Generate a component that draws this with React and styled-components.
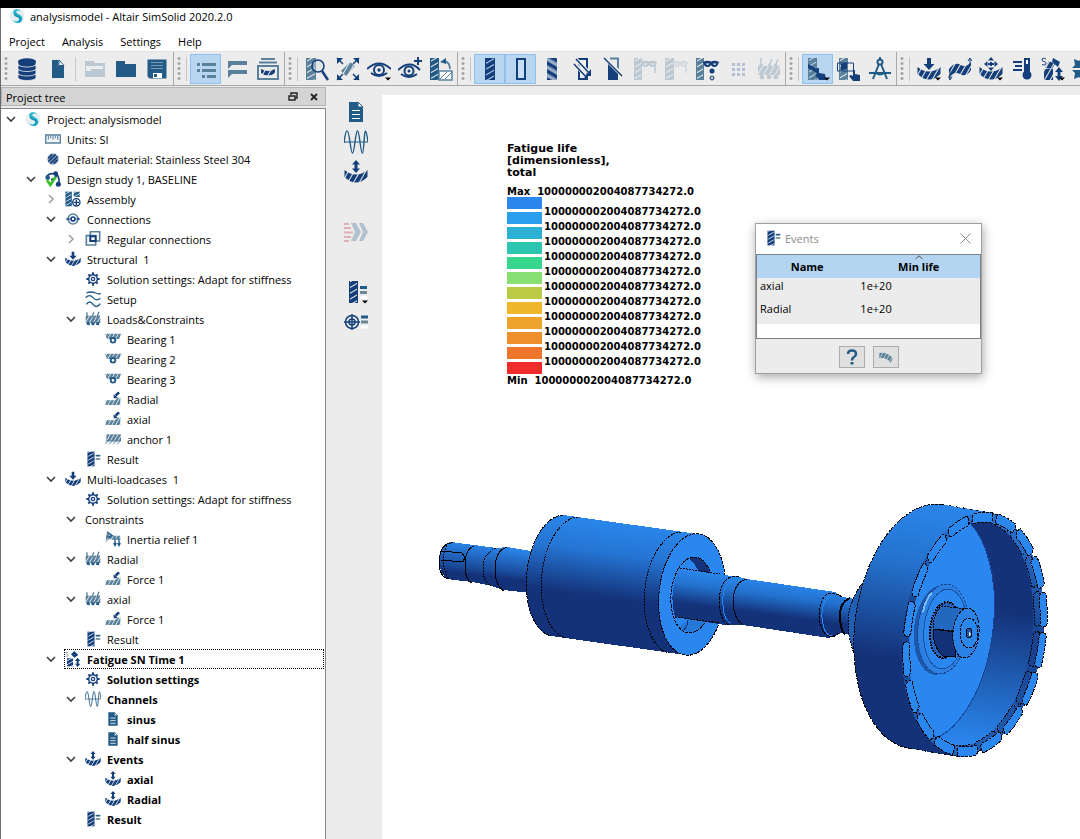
import React from 'react'
import styled, { createGlobalStyle } from 'styled-components'

const navy = '#143f7b'
const teal = '#225b86'
const slate = '#5a819b'
const pale = '#bcc8d2'

const GlobalStyle = createGlobalStyle`
* {
box-sizing: border-box;
}

body {
margin: 0;
background-color: #ececec;
color: #000;
font-family: 'Open Sans', 'Noto Sans', sans-serif;
font-size: 11px;
}

button {
font: inherit;
color: inherit;
padding: 0;
border: none;
background: none;
}
`;

const Window = styled.div`
display: flex;
flex-direction: column;
height: 100vh;
overflow: hidden;
border-top: 8px solid #000;
`;

const Frame = styled.div`
display: flex;
flex-direction: column;
flex: 1;
min-height: 0;
border-left: 1px solid #6b6b6b;
`;

const TitleBar = styled.header`
display: flex;
align-items: center;
gap: 5px;
height: 16px;
padding-left: 8px;
background-color: #fff;
`;

const MenuBar = styled.nav`
display: flex;
align-items: center;
gap: 17px;
height: 28px;
padding: 8px 8px 0;
background-color: #fff;
border-bottom: 1px solid #e2e2e2;
`;

const ToolbarRow = styled.div`
display: flex;
height: 34px;
flex-shrink: 0;
overflow: hidden;
border-bottom: 1px solid #a8a8a8;
`;

const ToolGroup = styled.div`
display: flex;
align-items: center;
flex-shrink: 0;
padding-right: 1px;
border-right: 1px solid #a8a8a8;
`;

const Grip = styled.span`
width: 10px;
height: 26px;
background: radial-gradient(circle at 50% 50%, #a6a6a6 1px, transparent 2px) 3px 0 / 4px 5px repeat-y;
`;

const Divider = styled.span`
width: 6px;
height: 24px;
background: linear-gradient(#c6c6c6, #c6c6c6) 2px 0 / 1px 100% no-repeat;
`;

const ToolButton = styled.button`
display: flex;
align-items: center;
justify-content: center;
width: 31px;
height: 30px;
border: 1px solid ${(props) => (props.$active ? '#91c1f0' : 'transparent')};
background-color: ${(props) => (props.$active ? '#b9d6f0' : 'transparent')};
`;

const Main = styled.div`
display: flex;
flex: 1;
min-height: 0;
`;

const Dock = styled.aside`
display: flex;
flex-direction: column;
width: 325px;
flex-shrink: 0;
padding-top: 1px;
`;

const DockHeader = styled.div`
display: flex;
align-items: center;
gap: 6px;
height: 19px;
padding: 1px 4px 0;
border: 1px solid #b4b4b4;
background-color: #d4d4d4;

h2 {
flex: 1;
margin: 0;
font: inherit;
}
`;

const SmallButton = styled.button`
display: flex;
align-items: center;
justify-content: center;
width: 15px;
height: 15px;
`;

const Tree = styled.ul`
flex: 1;
margin: 2px 0 0;
padding: 0;
list-style: none;
overflow: hidden;
background-color: #fff;
border-top: 1px solid #828790;
border-right: 1px solid #828790;
`;

const TreeRow = styled.li`
display: flex;
align-items: center;
height: 20px;
padding-left: ${(props) => props.$level * 20 + 2}px;
font-weight: ${(props) => (props.$bold ? 700 : 400)};
`;

const Toggle = styled.span`
display: flex;
justify-content: center;
width: 16px;
margin-right: 5px;
flex-shrink: 0;
`;

const ToggleButton = styled.button`
display: flex;
align-items: center;
justify-content: center;
width: 16px;
height: 16px;
`;

const TreeLabel = styled.span`
display: flex;
align-items: center;
flex: 1;
gap: 6px;
height: 20px;
margin-right: 1px;
padding-left: 1px;
white-space: pre;
outline: ${(props) => (props.$focused ? '1px dotted #000' : 'none')};
outline-offset: -1px;
`;

const SideBar = styled.div`
display: flex;
flex-direction: column;
align-items: center;
width: 56px;
flex-shrink: 0;
padding: 11px 0 0 4px;
`;

const SideGap = styled.span`
height: 30px;
`;

const Viewport = styled.main`
position: relative;
flex: 1;
min-width: 0;
margin-top: 9px;
background-color: #fff;
overflow: hidden;
`;

const ModelView = styled.svg`
display: block;
width: 100%;
height: 100%;
`;

const Legend = styled.section`
position: absolute;
left: 125px;
top: 48px;
font-family: 'DejaVu Sans', sans-serif;
font-size: 10px;
font-weight: 700;
line-height: 12px;

h3 {
margin: 0 0 7px;
font-size: 11px;
}

p {
margin: 0;
white-space: pre;
}
`;

const LegendScale = styled.div`
display: flex;
gap: 2px;
margin: -1px 0 1px;
`;

const SwatchColumn = styled.div`
display: grid;
gap: 3px;
`;

const Swatch = styled.span`
width: 35px;
height: 12px;
background-color: ${(props) => props.$color};
`;

const ValueColumn = styled.div`
padding-top: 7px;
line-height: 15px;
`;

const Dialog = styled.section`
position: absolute;
left: 373px;
top: 128px;
width: 227px;
border: 1px solid #a0a0a0;
background-color: #ececec;
box-shadow: 1px 3px 10px rgba(0, 0, 0, 0.35);
`;

const DialogTitle = styled.div`
display: flex;
align-items: center;
gap: 4px;
height: 30px;
padding: 0 8px 2px 9px;
background-color: #fff;
color: #8c8c8c;

h2 {
flex: 1;
margin: 0;
font: inherit;
}
`;

const TableFrame = styled.div`
height: 85px;
border: 1px solid #7b8086;
background-color: #fff;
`;

const EventTable = styled.table`
width: 100%;
border-collapse: collapse;
table-layout: fixed;
background-color: #ececec;

th {
position: relative;
height: 23px;
padding: 0;
background-color: #b4d5f2;
}

th:first-child {
width: 45%;
}

td {
height: 23px;
padding: 0 3px;
line-height: 16px;
vertical-align: top;
}
`;

const SortMark = styled.svg`
position: absolute;
left: 50%;
top: 0;
width: 8px;
height: 5px;
margin-left: -4px;
`;

const DialogFooter = styled.div`
display: flex;
justify-content: center;
gap: 8px;
padding: 7px 0 5px;
`;

const FooterButton = styled.button`
display: flex;
align-items: center;
justify-content: center;
width: 26px;
height: 22px;
border: 1px solid #adadad;
background-color: #e0e0e0;
`;

// shared stripes for the hatched "solid" glyphs
const stripes = { navy, slate, pale, teal }

const Patterns = () => (
    <svg width="0" height="0" style={{ position: 'absolute' }} aria-hidden="true">
        <defs>
            {Object.keys(stripes).map((key) => (
                <React.Fragment key={key}>
                    <pattern id={`bar-${key}`} width="5" height="5" patternUnits="userSpaceOnUse" patternTransform="rotate(-30)">
                        <rect width="5" height="4" fill={stripes[key]} />
                    </pattern>
                    <pattern id={`arc-${key}`} width="5" height="5" patternUnits="userSpaceOnUse" patternTransform="rotate(30)">
                        <rect width="4" height="5" fill={stripes[key]} />
                    </pattern>
                </React.Fragment>
            ))}
            <pattern id="bar-mixed" width="7" height="7" patternUnits="userSpaceOnUse" patternTransform="rotate(30)">
                <rect width="7" height="7" fill="#98abc6" />
                <rect width="7" height="3.5" fill={navy} />
            </pattern>
        </defs>
    </svg>
)

const Bar = ({ x = 7, color = 'navy', w = 10 }) => (
    <>
        <rect x={x} y="1" width={w} height="22" fill={`url(#bar-${color})`} />
        <path d={`M${x + 0.5} 1v22M${x + w - 0.5} 1v22`} stroke={stripes[color]} />
    </>
)

const arcPath = 'M0.500 10Q12 19 23.500 10V17Q12 28 0.500 17Z'
const Caret = () => <path d="M18 20.500h6l-3 3z" fill="#000" />
const Mask = ({ color }) => (
    <path d="M8 5q4-2 8-.5 4-1.500 8 .5-1.500 5.500-5 5-2 0-3-2-1 2-3 2-4 .5-5-5zm3 1.500q0 1.500 2 1.500l1.500-1.500zm7 0 1 1.500q2 0 2.500-1.500z" fill={color} fillRule="evenodd" />
)

const icons = {
    logo: (
        <>
            <circle cx="12" cy="12" r="11" fill="#e4eef1" />
            <path d="M18 5C13-1 4 3 7 9c2 4 9 3 8 8-1 4-6 4-9 1 3 7 14 6 14-2 0-7-9-6-9-10 0-3 4-3 7-1z" fill="#27b3cf" />
            <path d="M8 7c1 5 9 4 10 9 .5 3-2 5-4 5 3-2 3-5-1-7C8 12 6 10 8 7z" fill="#1a8fa8" />
        </>
    ),
    database: (
        <>
            {[16, 11.5, 7, 2.500].map((y) => (
                <path key={y} d={`M3 ${y + 1.500}v3c0 4 18 4 18 0v-3z`} fill={navy} stroke="#ececec" strokeWidth=".8" />
            ))}
            <ellipse cx="12" cy="4.500" rx="9" ry="3.200" fill={navy} />
        </>
    ),
    file: (
        <>
            <path d="M6 3h6.500v6H18v12H6z" fill={teal} />
            <path d="M13 3l5 5.500h-5z" fill="#fff" stroke={teal} />
        </>
    ),
    open: <path d="M2 4h9v2h11v14H2zM3 9v5h5v-2h12V9z" fill={pale} fillRule="evenodd" />,
    folder: <path d="M2 4h9v3h11v13H2z" fill={teal} />,
    save: (
        <>
            <path d="M2.500 2.500h19v19h-17l-2-2z" fill={teal} />
            <path d="M6 5.500h12M6 8.500h12M6 11.500h12" stroke="#7d9ab0" />
            <path d="M8 16h9v5H8z" fill="#fff" />
            <path d="M9 17h3v3H9z" fill={teal} />
        </>
    ),
    list: (
        <path d="M3 6h3v3H3zM8 6h14v3H8zM3 12h3v3H3zM8 12h14v3H8zM8 18h3v3H8zM13 18h9v3h-9z" fill={slate} />
    ),
    chat: <path d="M3 4h19v4H7l-4 4zM3 13h19v4H7l-4 4z" fill={slate} />,
    stack: (
        <>
            <path d="M5 1h14v2H5zM3 4.500h18v2H3z" fill={slate} />
            <path d="M2 9h20v13H2z" fill="none" stroke={slate} strokeWidth="2" />
            <path d="M5 12q7 4 14 0v4q-7 5-14 0z" fill="url(#arc-navy)" />
        </>
    ),
    inspect: (
        <>
            <Bar x={1} color="slate" w={10} />
            <circle cx="13" cy="9" r="6" fill="#d5dde3" fillOpacity=".4" stroke={navy} strokeWidth="1.600" />
            <path d="M17 14l6 9" stroke={navy} strokeWidth="2.500" />
        </>
    ),
    fit: (
        <>
            <path d="M5 14L14 5l5 4-9 10z" fill="url(#arc-slate)" />
            <path d="M1 1l6 6M23 1l-6 6M1 23l6-6M23 23l-6-6" stroke={navy} strokeWidth="1.500" />
            <path d="M1 1h6L1 7zM23 1v6l-6-6zM1 23v-6l6 6zM23 23h-6l6-6z" fill={navy} />
        </>
    ),
    eye: (
        <>
            <path d="M0 12q12-11 24 0" fill="none" stroke={navy} strokeWidth="2" />
            <circle cx="12" cy="13" r="5" fill="none" stroke={navy} strokeWidth="2" />
            <circle cx="12" cy="13" r="1.700" fill={navy} />
            <path d="M4 16q8 6 16 0" fill="none" stroke={navy} strokeWidth="2" />
            <Caret />
        </>
    ),
    eyeAdd: (
        <>
            <path d="M0 13q12-11 22 0" fill="none" stroke={navy} strokeWidth="2" />
            <circle cx="11" cy="14" r="4.500" fill="none" stroke={navy} strokeWidth="2" />
            <circle cx="11" cy="14" r="1.500" fill={navy} />
            <path d="M3 17q8 6 16 0M16 4h8M20 0v8" fill="none" stroke={navy} strokeWidth="2" />
        </>
    ),
    sectionView: (
        <>
            <Bar x={1} w={9} color="teal" />
            <path d="M10 14h13v9H10z" fill="#fff" stroke={slate} strokeWidth="1.500" />
            <path d="M11 22l7-7M16 22l7-7" stroke={slate} />
            <path d="M15 4q6 1 6 8" fill="none" stroke={slate} strokeWidth="1.800" />
            <path d="M11 5l6-4v6z" fill={teal} />
        </>
    ),
    solid: <Bar />,
    outline: <path d="M8 2h8v20H8z" fill="#c7def3" stroke={navy} strokeWidth="2" />,
    mixed: <path d="M7 1h10v22H7z" fill="url(#bar-mixed)" />,
    hideOne: (
        <>
            <path d="M8 2h8v20H8z" fill="#f2f2f2" stroke={navy} strokeWidth="2" />
            <path d="M3 6l14 15M6 3l14 15" stroke="#ececec" strokeWidth="4" />
            <path d="M3 7l13 14M5 2l14 15" stroke={navy} strokeWidth="1.500" />
            <path d="M20 12v7h-6zM17 17v6h-6z" fill={navy} />
        </>
    ),
    hideHalf: (
        <>
            <path d="M6 2h10v21H6z" fill={navy} />
            <path d="M6 1h10v12L6 3z" fill="#ececec" />
            <path d="M8 1.500h8v11" fill="none" stroke={slate} strokeWidth="2" />
            <path d="M2 0l18 18" stroke="#ececec" strokeWidth="4" />
            <path d="M2 1l18 18" stroke={navy} strokeWidth="1.500" />
        </>
    ),
    maskBar: (
        <>
            <Bar x={1} w={8} color="pale" />
            <Mask color={pale} />
            <path d="M22 7v9" stroke={pale} strokeWidth="1.500" />
        </>
    ),
    maskPale: (
        <>
            <Bar x={1} w={9} color="pale" />
            <Mask color="#d2dae0" />
            <path d="M22 7v9" stroke="#d2dae0" strokeWidth="1.500" />
        </>
    ),
    maskActive: (
        <>
            <Bar x={1} w={8} color="slate" />
            <Mask color={navy} />
            <circle cx="17" cy="14" r="2.500" fill={navy} />
            <circle cx="17" cy="21" r="2" fill={pale} stroke={navy} />
        </>
    ),
    dots: (
        <path d="M6 6h3v3H6zM11 6h3v3h-3zM16 6h3v3h-3zM6 11h3v3H6zM11 11h3v3h-3zM16 11h3v3h-3zM6 16h3v3H6zM11 16h3v3h-3zM16 16h3v3h-3z" fill="#b3c0d3" />
    ),
    loadsPale: (
        <>
            <path d="M1 9h22v9H1z" fill="url(#arc-pale)" />
            <path d="M4 1v9M15 2l-3 7M21 2l-3 7" stroke={pale} strokeWidth="1.500" />
            <path d="M2 7h4l-2 4zM11 7l4 1-3 3zM17 7l4 1-3 3z" fill={pale} />
            <circle cx="5" cy="20" r="2.300" fill={pale} />
            <circle cx="12" cy="20" r="2.300" fill={pale} />
            <circle cx="19" cy="20" r="2.300" fill={pale} />
        </>
    ),
    pick: (
        <>
            <Bar x={2} w={9} color="slate" />
            <path d="M2 7l9 5v4l-9-5z" fill={navy} />
            <path d="M11 11h2v5l6 1 1 6h-7l-4-5 2-1z" fill={navy} />
            <Caret />
        </>
    ),
    pickBox: (
        <>
            <Bar x={2} w={9} color="slate" />
            <path d="M4 7l6-2v7l-6 2z" fill={navy} />
            <path d="M.500 6h16v8h-16z" fill="none" stroke={navy} />
            <path d="M16 13h2v4l5 1v6h-7l-4-5 2-1 2 1z" fill={navy} />
        </>
    ),
    compass: (
        <>
            <circle cx="12" cy="5" r="2.500" fill="none" stroke={teal} strokeWidth="2" />
            <path d="M12 0v3M11 7L5 22M13 7l6 15M1 16h22M8 16q4 3 8 0" fill="none" stroke={teal} strokeWidth="2" />
        </>
    ),
    load: (
        <>
            <path d={arcPath} fill="url(#arc-navy)" />
            <path d="M10 1h4v6h3.500L12 13 6.500 7H10z" fill={navy} />
        </>
    ),
    loadMenu: (
        <>
            <path d={arcPath} fill="url(#arc-navy)" />
            <path d="M10 1h4v6h3.500L12 13 6.500 7H10z" fill={navy} />
            <Caret />
        </>
    ),
    modal: (
        <>
            <path d="M1 12q6-8 12-4 5 3 10-3v8q-5 8-11 4-6-3-11 4z" fill="url(#arc-navy)" />
            <path d="M2 13v9M.500 19.500L2 23l2-3.500M22 9V2M20 4l2-3 2 3" fill="none" stroke={navy} />
        </>
    ),
    dynamic: (
        <>
            <path d={arcPath} fill="url(#arc-navy)" />
            <path d="M12 0l3 3.500H9zM12 14l3-3.500H9zM5 7l3.500-3v6zM19 7l-3.500-3v6z" fill={navy} />
            <path d="M11 5h2v4h-2zM9 6h6v2H9z" fill={navy} />
            <Caret />
        </>
    ),
    thermal: (
        <>
            <path d="M15 2h4v12h-4z" fill="#fff" stroke={navy} strokeWidth="2" />
            <circle cx="17" cy="18" r="4.500" fill={navy} />
            <path d="M17 7v10" stroke={navy} strokeWidth="2" />
            <path d="M3 5h9M5 9h7M3 13h9" stroke={navy} strokeWidth="1.800" />
        </>
    ),
    fatigue: (
        <>
            <path d="M3 11h9v12H3z" fill="url(#bar-navy)" />
            <path d="M9 5l5-5 6 6-6 4z" fill={navy} />
            <path d="M19 10l4 5h-2.500v4H23l-4 5-4-5h2.500v-4H15z" fill={navy} />
            <path d="M5 2Q1 0 1 3q0 1 2 1.500T5 6q0 3-4 1.500" fill="none" stroke={slate} />
        </>
    ),
    fatigueMenu: (
        <>
            <path d="M3 12h9v11H3z" fill="url(#arc-navy)" />
            <path d="M4 11l4-7 6 3-3 5z" fill="url(#arc-navy)" />
            <path d="M12 1l7 4-2 5-6-5z" fill={navy} />
            <path d="M18 10l4 5h-2.500v4H22l-4 5-4-5h2.500v-4H14z" fill={navy} />
            <path d="M5 2Q1 0 1 3q0 1 2 1.500T5 6q0 3-4 1.500" fill="none" stroke={navy} />
            <Caret />
        </>
    ),
    collapse: (
        <path d="M2 2l5 2 3-3v10H0l3-3zM2 22l5-2 3 3V13H0l3 3zM22 2l-5 2-3-3v10h10l-3-3zM22 22l-5-2-3 3V13h10l-3 3z" fill={teal} />
    ),
    document: (
        <>
            <path d="M5 2h9l5 5v15H5z" fill={teal} />
            <path d="M14 2v5h5z" fill="#fff" stroke={teal} />
            <path d="M8 10.500h8M8 14.500h8M8 18.500h8" stroke="#fff" strokeWidth="1.200" />
        </>
    ),
    wave: (
        <>
            <path d="M0 12h24" stroke={teal} />
            <path d="M0 13C2-3 4-3 6 12s3 15 5 0 3-15 5 0 3 15 4 0 2-14 4 0" fill="none" stroke={teal} strokeWidth="1.400" />
        </>
    ),
    event: (
        <>
            <path d={arcPath} fill="url(#arc-navy)" />
            <path d="M12 0l4 4.500h-2.500v4H16L12 13 8 8.500h2.500v-4H8z" fill={navy} />
        </>
    ),
    run: (
        <>
            <path d="M0 4h5M0 8h7M0 12.500h9M0 17h7M0 21h5" stroke="#dfb1b5" strokeWidth="2" />
            <path d="M7 3h5l5 9-5 9H7l4-9zM15 3h4l5 9-5 9h-4l4-9z" fill="#b3c0ce" />
        </>
    ),
    resultMenu: (
        <>
            <Bar x={5} w={9} />
            <path d="M16 7.500h7" stroke={teal} strokeWidth="3" />
            <path d="M16 12.500h7" stroke="#6f8898" strokeWidth="3" />
            <path d="M16 17.500h7" stroke="#fff" strokeWidth="3" />
            <Caret />
        </>
    ),
    result: (
        <>
            <Bar x={4} w={10} />
            <path d="M16 7h7" stroke={teal} strokeWidth="2.500" />
            <path d="M16 12h7" stroke="#6f8898" strokeWidth="2.500" />
        </>
    ),
    target: (
        <>
            <circle cx="8" cy="12" r="6.500" fill="none" stroke={navy} strokeWidth="1.500" />
            <circle cx="8" cy="12" r="3" fill="none" stroke={navy} strokeWidth="1.500" />
            <path d="M0 12h16M8 4v16" stroke={navy} strokeWidth="1.500" />
            <path d="M17 7h7" stroke={teal} strokeWidth="3" />
            <path d="M17 12h7" stroke="#6f8898" strokeWidth="3" />
            <path d="M17 17h7" stroke="#fff" strokeWidth="3" />
        </>
    ),
    ruler: (
        <>
            <path d="M1 6h22v12H1z" fill="#eef2f5" stroke={slate} strokeWidth="2" />
            <path d="M5 7v6M8.500 7v4M12 7v6M15.500 7v4M19 7v6" stroke={slate} strokeWidth="1.500" />
        </>
    ),
    material: (
        <>
            <circle cx="12" cy="12" r="8.500" fill="#8fa9bd" />
            <path d="M5 11l6-6M5 16L16 5M8 19L19 8M13 19l6-6" stroke={navy} strokeWidth="2.600" />
        </>
    ),
    design: (
        <>
            <path d="M2 9Q5 3 14 4q8 0 7 16M9 13q8-1 8-8" fill="none" stroke={navy} strokeWidth="2.500" />
            <circle cx="16" cy="4" r="3.500" fill={navy} />
            <circle cx="4" cy="10" r="3.500" fill={teal} />
            <circle cx="20" cy="20" r="3.800" fill={navy} />
            <path d="M3 14l5 7 8-12" fill="none" stroke="#39c02d" strokeWidth="4" />
        </>
    ),
    assembly: (
        <>
            <rect x="1" y="1" width="9" height="22" fill="url(#bar-teal)" />
            <rect x="13" y="1" width="9" height="8" fill="url(#bar-teal)" />
            <path d="M1.500 1v22M9.500 1v22" stroke={teal} />
            <circle cx="17" cy="17" r="5.500" fill="#fff" stroke={navy} strokeWidth="2" />
            <path d="M13 17h8M17 13v8" stroke={navy} strokeWidth="2" />
        </>
    ),
    connections: (
        <>
            <circle cx="12" cy="12" r="7.500" fill="none" stroke={slate} strokeWidth="2.500" />
            <circle cx="12" cy="12" r="3" fill="none" stroke={navy} strokeWidth="2.500" />
            <path d="M2 12h5M17 12h5" stroke={navy} strokeWidth="2.500" />
        </>
    ),
    regular: (
        <>
            <path d="M8 1h14v14H8z" fill="none" stroke={slate} strokeWidth="2.500" />
            <path d="M2 7h14v14H2z" fill="none" stroke={slate} strokeWidth="2.500" />
            <path d="M8 8h8v7H8z" fill="#fff" stroke={navy} strokeWidth="3" />
        </>
    ),
    gear: (
        <>
            <circle cx="12" cy="12" r="6.500" fill="none" stroke={navy} strokeWidth="2.200" />
            <circle cx="12" cy="12" r="2.500" fill="none" stroke={navy} strokeWidth="2" />
            <path d="M12 2v4M12 18v4M2 12h4M18 12h4M5 5l3 3M16 16l3 3M19 5l-3 3M8 16l-3 3" stroke={navy} strokeWidth="2.800" />
        </>
    ),
    setup: (
        <path d="M2 3q7-3 14 0t7 0M1 10q6-6 11 0t11 1M2 20q5-7 10 0t11-1" fill="none" stroke={teal} strokeWidth="2" />
    ),
    loads: (
        <>
            <path d="M1 7h22v11H1z" fill="url(#arc-slate)" />
            <path d="M3 2v7M13 2l-2 7M21 1l-3 8" stroke={slate} strokeWidth="2" />
            <circle cx="5" cy="19" r="2.500" fill={teal} />
            <circle cx="12" cy="19" r="2.500" fill={teal} />
            <circle cx="19" cy="19" r="2.500" fill={teal} />
        </>
    ),
    bearing: (
        <>
            <path d="M0 4h24l-2 8H3z" fill="url(#arc-slate)" />
            <circle cx="12" cy="14" r="3.500" fill="#fff" stroke={teal} strokeWidth="2.800" />
        </>
    ),
    force: (
        <>
            <path d="M1 14h13l9-5v12H1z" fill="url(#arc-slate)" />
            <path d="M21 2l-5 5" stroke={navy} strokeWidth="4" />
            <path d="M13 5v6h7z" fill={navy} />
        </>
    ),
    anchor: (
        <>
            <path d="M2 5h22v10H2z" fill="url(#arc-slate)" />
            <path d="M0 20l5-5M6 20l5-5M12 20l5-5M18 20l5-5M1 15h22" stroke={slate} strokeWidth="1.500" />
        </>
    ),
    inertia: (
        <>
            <path d="M2 3q6 0 8 4h13v6H10Q6 10 1 18z" fill="url(#arc-slate)" />
            <path d="M3 1l8 6-8 3M15 11v9M21 11v9M13 18l2 4 2-4M19 18l2 4 2-4" fill="none" stroke={teal} strokeWidth="2" />
        </>
    ),
    beam: <path d="M2 6q12-2 20 8l-3 7Q13 12 2 14z" fill="url(#arc-slate)" />,
}

const Icon = ({ name, size = 24 }) => (
    <svg width={size} height={size} viewBox="0 0 24 24" aria-hidden="true">{icons[name]}</svg>
)

const toolGroups = [
    ['list*', 'chat', 'stack'],
    ['inspect', 'fit', 'eye', 'eyeAdd', 'sectionView'],
    ['solid*', 'outline*', 'mixed', 'hideOne', 'hideHalf', 'maskBar', 'maskPale', 'maskActive', 'dots', 'loadsPale'],
    ['pick*', 'pickBox', 'compass'],
    ['loadMenu', 'modal', 'dynamic', 'thermal', 'fatigueMenu', 'collapse'],
]

const treeItems = [
    { level: 0, icon: 'logo', text: 'Project: analysismodel', state: 'open' },
    { level: 1, icon: 'ruler', text: 'Units: SI' },
    { level: 1, icon: 'material', text: 'Default material: Stainless Steel 304' },
    { level: 1, icon: 'design', text: 'Design study 1, BASELINE', state: 'open' },
    { level: 2, icon: 'assembly', text: 'Assembly', state: 'closed' },
    { level: 2, icon: 'connections', text: 'Connections', state: 'open' },
    { level: 3, icon: 'regular', text: 'Regular connections', state: 'closed' },
    { level: 2, icon: 'load', text: 'Structural  1', state: 'open' },
    { level: 3, icon: 'gear', text: 'Solution settings: Adapt for stiffness' },
    { level: 3, icon: 'setup', text: 'Setup' },
    { level: 3, icon: 'loads', text: 'Loads&Constraints', state: 'open' },
    { level: 4, icon: 'bearing', text: 'Bearing 1' },
    { level: 4, icon: 'bearing', text: 'Bearing 2' },
    { level: 4, icon: 'bearing', text: 'Bearing 3' },
    { level: 4, icon: 'force', text: 'Radial' },
    { level: 4, icon: 'force', text: 'axial' },
    { level: 4, icon: 'anchor', text: 'anchor 1' },
    { level: 3, icon: 'result', text: 'Result' },
    { level: 2, icon: 'load', text: 'Multi-loadcases  1', state: 'open' },
    { level: 3, icon: 'gear', text: 'Solution settings: Adapt for stiffness' },
    { level: 3, text: 'Constraints', state: 'open' },
    { level: 4, icon: 'inertia', text: 'Inertia relief 1' },
    { level: 3, icon: 'loads', text: 'Radial', state: 'open' },
    { level: 4, icon: 'force', text: 'Force 1' },
    { level: 3, icon: 'loads', text: 'axial', state: 'open' },
    { level: 4, icon: 'force', text: 'Force 1' },
    { level: 3, icon: 'result', text: 'Result' },
    { level: 2, icon: 'fatigue', text: 'Fatigue SN Time 1', state: 'open', bold: true, focused: true },
    { level: 3, icon: 'gear', text: 'Solution settings', bold: true },
    { level: 3, icon: 'wave', text: 'Channels', state: 'open', bold: true },
    { level: 4, icon: 'document', text: 'sinus', bold: true },
    { level: 4, icon: 'document', text: 'half sinus', bold: true },
    { level: 3, icon: 'event', text: 'Events', state: 'open', bold: true },
    { level: 4, icon: 'event', text: 'axial', bold: true },
    { level: 4, icon: 'event', text: 'Radial', bold: true },
    { level: 3, icon: 'result', text: 'Result', bold: true },
]

const legendColors = [
    '#2b87ee', '#2c9eee', '#2cb0d3', '#2cc5b0', '#37d68f', '#88df73',
    '#bccb46', '#eeb72c', '#eea32c', '#ee8f2c', '#ee762c', '#ee2c2c',
]

const lifeValue = '100000002004087734272.0'

const events = [
    { name: 'axial', life: '1e+20' },
    { name: 'Radial', life: '1e+20' },
]

// front faces of the wheel teeth, one slice of the rim ring each
const toothCount = 18
const toothPath = (index) => {
    const step = (Math.PI * 2) / toothCount
    const from = index * step - 0.09
    const to = from + step - 0.05
    const point = (angle, rx, ry) => `${(975 + rx * Math.cos(angle)).toFixed(1)} ${(634.5 + ry * Math.sin(angle)).toFixed(1)}`
    return `M${point(from, 69, 120)}L${point(from + 0.02, 71, 123)}A71 123 0 0 1 ${point(to - 0.02, 71, 123)}L${point(to, 69, 120)} ${point(to, 66, 115)} ${point(to - 0.02, 64, 113)}A64 113 0 0 0 ${point(from + 0.02, 64, 113)}L${point(from, 66, 115)}Z`
}
const teeth = Array.from({ length: toothCount }, (_, index) => toothPath(index))

const Model = () => (
    <ModelView viewBox="382 95 698 744" preserveAspectRatio="xMinYMin meet" role="img" aria-label="Shaft with rotor and wheel" shapeRendering="crispEdges">
        <defs>
            <linearGradient id="drum" gradientUnits="userSpaceOnUse" x1="620" y1="523" x2="604" y2="645">
                <stop offset="0" stopColor="#2a86ea" />
                <stop offset=".25" stopColor="#2575d4" />
                <stop offset=".62" stopColor="#143279" />
                <stop offset="1" stopColor="#143279" />
            </linearGradient>
            <linearGradient id="shaftLeft" gradientUnits="userSpaceOnUse" x1="490" y1="546" x2="485" y2="586">
                <stop offset="0" stopColor="#2a86ea" />
                <stop offset=".6" stopColor="#1a4a9a" />
                <stop offset=".75" stopColor="#143279" />
            </linearGradient>
            <linearGradient id="shaftRight" gradientUnits="userSpaceOnUse" x1="767" y1="581" x2="761" y2="628">
                <stop offset="0" stopColor="#2a86ea" />
                <stop offset=".3" stopColor="#2270cc" />
                <stop offset=".7" stopColor="#143279" />
            </linearGradient>
            <linearGradient id="wheelSide" gradientUnits="userSpaceOnUse" x1="950" y1="506" x2="918" y2="750">
                <stop offset="0" stopColor="#2a86ea" />
                <stop offset=".25" stopColor="#2472cd" />
                <stop offset=".64" stopColor="#143279" />
                <stop offset="1" stopColor="#143279" />
            </linearGradient>
            <linearGradient id="wheelWall" gradientUnits="userSpaceOnUse" x1="1015" y1="520" x2="985" y2="750">
                <stop offset="0" stopColor="#143279" />
                <stop offset=".4" stopColor="#143279" />
                <stop offset=".85" stopColor="#2575d4" />
                <stop offset="1" stopColor="#2b87f0" />
            </linearGradient>
            <linearGradient id="rim" gradientUnits="userSpaceOnUse" x1="985" y1="512" x2="965" y2="757">
                <stop offset="0" stopColor="#2575d4" />
                <stop offset=".5" stopColor="#17408c" />
                <stop offset="1" stopColor="#2064bb" />
            </linearGradient>
            <clipPath id="bore"><ellipse cx="692" cy="595" rx="21" ry="38" transform="rotate(5 692 595)" /></clipPath>
            <clipPath id="opening"><ellipse cx="971" cy="634" rx="61" ry="113" transform="rotate(7.500 971 634)" /></clipPath>
            <clipPath id="wheelFront"><ellipse cx="975" cy="634.500" rx="71" ry="123" transform="rotate(7.500 975 634.500)" /></clipPath>
        </defs>

        {/* left shaft end */}
        <path d="M451 542l46 6 10-1 24 4v42l-28-3-11-4-20-4-25-3q-7-5-8-18 2-17 12-19z" fill="url(#shaftLeft)" />
        <g fill="none" stroke="#000">
            <path d="M453 543q-13-1-14 20 1 15 10 16M442 551l20 2 3 4-2 5-22-2M474 546q-9 3-9 20 0 14 7 17M507 547q-12 4-12 22 0 17 9 22" />
            <path d="M447 545q-8 17 1 33M496 548q-13 6-13 20 0 14 8 18" strokeDasharray="2 1" />
        </g>

        {/* rotor drum */}
        <path d="M563 515L698 534 686 655 551 636A33 61 6 0 1 563 515z" fill="url(#drum)" />
        <g fill="none" stroke="#000">
            <path d="M563 515A33 61 6 0 0 551 636" strokeDasharray="3 1" />
            <path d="M578 517A33 61 6 0 0 566 638M681 532A33 61 6 0 0 669 653" strokeDasharray="2 1" />
        </g>
        <ellipse cx="692" cy="594.500" rx="33" ry="61" transform="rotate(6 692 594.500)" fill="#2b87f0" stroke="#000" strokeDasharray="3 1" />
        <g clipPath="url(#bore)">
            <path d="M665 550h55v90h-55z" fill="#2b87f0" />
            <path d="M690 554h30v30h-18q-2-15-12-25z" fill="#143279" />
            <path d="M690 618h28l-26 14q-8 0-14-4z" fill="#2478d8" />
            <path d="M688 620q0 8-7 12" fill="none" stroke="#143279" />
        </g>
        <ellipse cx="692" cy="595" rx="21" ry="38" transform="rotate(5 692 595)" fill="none" stroke="#000" strokeDasharray="3 1" />

        {/* right shaft */}
        <path d="M680 568l40 7 15 1 12 3 88 13 8 5 12 2v37l-14-3-12 5-86-13-18 0-50-8q-7-26 5-49z" fill="url(#shaftRight)" />
        <g fill="none" stroke="#000">
            <path d="M680 568l40 6M675 617l45 6" strokeDasharray="2 1" />
            <path d="M739 577q-18-4-20 24 1 22 11 24" strokeDasharray="3 1" />
            <path d="M747 579q-14 3-14 24 1 16 10 22" />
            <path d="M735 579q-14 6-12 26 1 16 8 18" stroke="#2b87f0" />
            <path d="M842 597q-20-13-23 17 1 22 14 23l6-4" strokeDasharray="3 1" />
            <path d="M831 596q-10 5-9 22 2 18 10 18" stroke="#2b87f0" />
            <path d="M850 598q-11 5-10 20 1 14 5 16" strokeWidth="2" />
        </g>

        {/* wheel */}
        <path d="M864 582q-12 12-16 35 0 24 7 38l10-1z" fill="#205fb4" stroke="#000" strokeDasharray="2 1" />
        <path d="M942 504.500L991 512.500 959 757 910 748.500A71 123 7.500 0 1 942 504.500z" fill="url(#wheelSide)" />
        <path d="M942 504.500A71 123 7.500 0 0 910 748.500" fill="none" stroke="#000" strokeDasharray="3 1" />
        <path d="M942 504.500l49 8M910 748.500l49 8" stroke="#000" strokeDasharray="2 5" />
        <ellipse cx="973" cy="634.500" rx="70" ry="121" transform="rotate(7.500 973 634.500)" fill="url(#rim)" />
        <g clipPath="url(#opening)">
            <path d="M890 500h160v260H890z" fill="url(#wheelWall)" />
            <ellipse cx="933" cy="626" rx="60" ry="116" transform="rotate(7.500 933 626)" fill="#2b87f0" stroke="#174391" />
        </g>
        <g clipPath="url(#wheelFront)">
            <g transform="translate(-6 -1) rotate(7.500 975 634.500)" fill="url(#rim)" stroke="#000" strokeDasharray="2 1">
                {teeth.map((d) => <path key={d} d={d} />)}
            </g>
        </g>
        <g transform="rotate(7.500 975 634.500)" fill="#2b87f0" stroke="#000" strokeDasharray="3 1">
            {teeth.map((d) => <path key={d} d={d} />)}
        </g>

        {/* hub */}
        <ellipse cx="939" cy="630" rx="25" ry="45" transform="rotate(6 939 630)" fill="#1d59ab" />
        <ellipse cx="943" cy="629" rx="25" ry="45" transform="rotate(6 943 629)" fill="#2b80e2" stroke="#174391" strokeDasharray="3 1" />
        <ellipse cx="945" cy="629" rx="21" ry="40" transform="rotate(6 945 629)" fill="#2b87f0" stroke="#1c4f9e" />
        <path d="M923 612q3-14 9-19" fill="none" stroke="#7dbcfa" strokeWidth="2" />
        <ellipse cx="945" cy="630" rx="15" ry="28" transform="rotate(6 945 630)" fill="#2264bd" stroke="#000" strokeWidth="2" strokeDasharray="2 1" />
        <path d="M941 606l26 3v23l-34-3q0-14 8-23z" fill="#2268bf" stroke="#000" strokeDasharray="2 1" />
        <path d="M933 629l22 3v25l-12-1q-10-8-10-27z" fill="#143279" stroke="#000" />
        <ellipse cx="966" cy="633" rx="13" ry="25" transform="rotate(5 966 633)" fill="#2b82e6" stroke="#000" strokeDasharray="3 1" />
        <ellipse cx="969" cy="633" rx="9" ry="15" fill="#2b87f0" stroke="#000" strokeDasharray="3 1" />
        <ellipse cx="969" cy="633" rx="3" ry="5" fill="#1c56a8" stroke="#000" />
        <path d="M969 632l2 2-2 2z" fill="#bfe0ff" />
    </ModelView>
)

function App() {
    return (
        <Window>
            <GlobalStyle />
            <Patterns />
            <Frame>
                <TitleBar>
                    <Icon name="logo" size={16} />
                    <span>analysismodel - Altair SimSolid 2020.2.0</span>
                </TitleBar>
                <MenuBar>
                    {['Project', 'Analysis', 'Settings', 'Help'].map((item) => (
                        <button key={item}>{item}</button>
                    ))}
                </MenuBar>

                <ToolbarRow>
                    <ToolGroup>
                        <Grip />
                        {['database', 'file'].map((name) => (
                            <ToolButton key={name} aria-label={name}><Icon name={name} /></ToolButton>
                        ))}
                        <Divider />
                        {['open', 'folder', 'save'].map((name) => (
                            <ToolButton key={name} aria-label={name}><Icon name={name} /></ToolButton>
                        ))}
                    </ToolGroup>
                    {toolGroups.map((group, index) => (
                        <ToolGroup key={index}>
                            <Grip />
                            <Divider />
                            {group.map((item) => {
                                const name = item.replace('*', '')
                                return (
                                    <ToolButton key={name} $active={item !== name} aria-label={name}>
                                        <Icon name={name} />
                                    </ToolButton>
                                )
                            })}
                        </ToolGroup>
                    ))}
                </ToolbarRow>

                <Main>
                    <Dock>
                        <DockHeader>
                            <h2>Project tree</h2>
                            <SmallButton aria-label="Float">
                                <svg width="10" height="10" viewBox="0 0 10 10">
                                    <path d="M3 3V1h6v5H7M1 4h6v4H1z" fill="none" stroke="#222" strokeWidth="1.400" />
                                </svg>
                            </SmallButton>
                            <SmallButton aria-label="Close">
                                <svg width="8" height="8" viewBox="0 0 8 8">
                                    <path d="M1 1l6 6M7 1L1 7" stroke="#222" strokeWidth="1.800" />
                                </svg>
                            </SmallButton>
                        </DockHeader>
                        <Tree>
                            {treeItems.map((item, index) => (
                                <TreeRow key={index} $level={item.level} $bold={item.bold}>
                                    <Toggle>
                                        {item.state && (
                                            <ToggleButton aria-label={`Toggle ${item.text}`}>
                                                <svg width="10" height="10" viewBox="0 0 10 10">
                                                    {item.state === 'open'
                                                        ? <path d="M1 3l4 4 4-4" fill="none" stroke="#404040" strokeWidth="1.600" />
                                                        : <path d="M3 1l4 4-4 4" fill="none" stroke="#a0a0a0" strokeWidth="1.600" />}
                                                </svg>
                                            </ToggleButton>
                                        )}
                                    </Toggle>
                                    <TreeLabel $focused={item.focused}>
                                        {item.icon && <Icon name={item.icon} size={16} />}
                                        <span>{item.text}</span>
                                    </TreeLabel>
                                </TreeRow>
                            ))}
                        </Tree>
                    </Dock>

                    <SideBar>
                        {['document', 'wave', 'event'].map((name) => (
                            <ToolButton key={name} aria-label={name}><Icon name={name} /></ToolButton>
                        ))}
                        <SideGap />
                        <ToolButton aria-label="run"><Icon name="run" /></ToolButton>
                        <SideGap />
                        {['resultMenu', 'target'].map((name) => (
                            <ToolButton key={name} aria-label={name}><Icon name={name} /></ToolButton>
                        ))}
                    </SideBar>

                    <Viewport>
                        <Model />
                        <Legend>
                            <h3>Fatigue life<br />[dimensionless],<br />total</h3>
                            <p>Max  {lifeValue}</p>
                            <LegendScale>
                                <SwatchColumn>
                                    {legendColors.map((color) => <Swatch key={color} $color={color} />)}
                                </SwatchColumn>
                                <ValueColumn>
                                    {legendColors.slice(1).map((color) => <p key={color}>{lifeValue}</p>)}
                                </ValueColumn>
                            </LegendScale>
                            <p>Min  {lifeValue}</p>
                        </Legend>

                        <Dialog>
                            <DialogTitle>
                                <Icon name="result" size={16} />
                                <h2>Events</h2>
                                <SmallButton aria-label="Close events">
                                    <svg width="11" height="11" viewBox="0 0 11 11">
                                        <path d="M.500 .500l10 10M10.500 .500l-10 10" stroke="#8a8a8a" />
                                    </svg>
                                </SmallButton>
                            </DialogTitle>
                            <TableFrame>
                                <EventTable>
                                    <thead>
                                        <tr>
                                            <th>Name</th>
                                            <th>
                                                <SortMark viewBox="0 0 8 5"><path d="M.500 4L4 .800 7.500 4" fill="none" stroke="#555" /></SortMark>
                                                Min life
                                            </th>
                                        </tr>
                                    </thead>
                                    <tbody>
                                        {events.map((event) => (
                                            <tr key={event.name}>
                                                <td>{event.name}</td>
                                                <td>{event.life}</td>
                                            </tr>
                                        ))}
                                    </tbody>
                                </EventTable>
                            </TableFrame>
                            <DialogFooter>
                                <FooterButton aria-label="Help on events">
                                    <svg width="14" height="16" viewBox="0 0 14 16">
                                        <path d="M3 5q0-3.500 4-3.500T11 5q0 2-2 3T7 11.500" fill="none" stroke={teal} strokeWidth="2.500" />
                                        <path d="M5.500 13h3v2.500h-3z" fill={teal} />
                                    </svg>
                                </FooterButton>
                                <FooterButton aria-label="Show event"><Icon name="beam" size={16} /></FooterButton>
                            </DialogFooter>
                        </Dialog>
                    </Viewport>
                </Main>
            </Frame>
        </Window>
    );
}

export default App
